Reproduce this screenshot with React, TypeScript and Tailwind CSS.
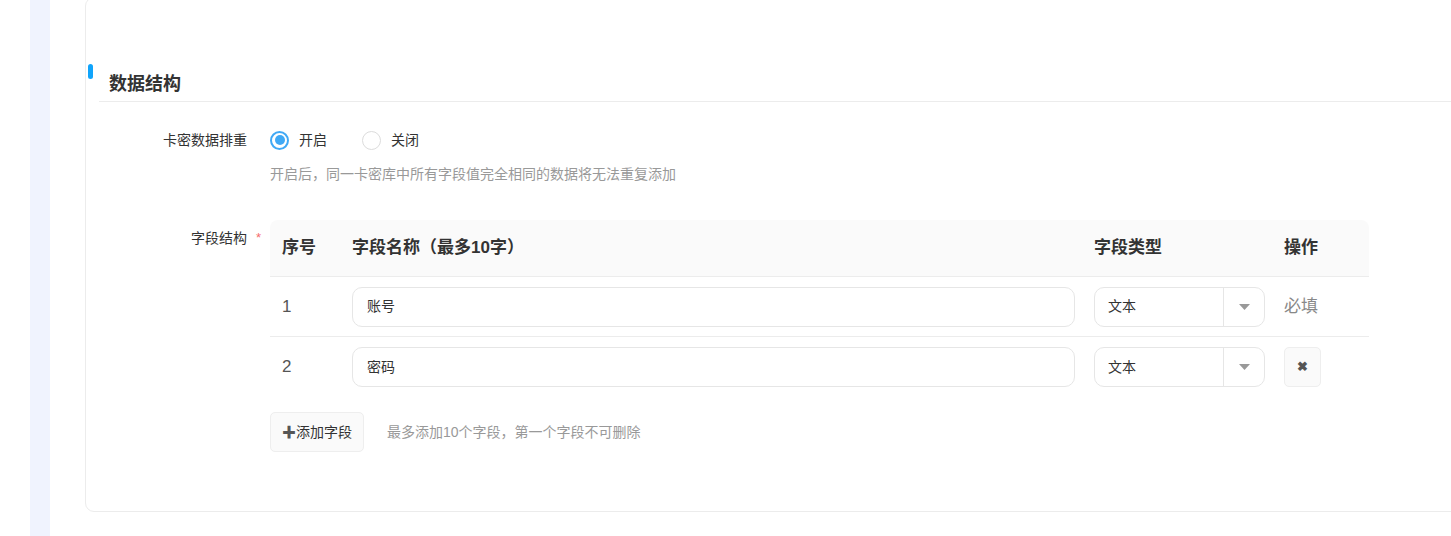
const font = { fontFamily: '"Liberation Sans", "Noto Sans CJK SC", sans-serif' };

type Row = { no: number; name: string; type: string; required: boolean };

const rows: Row[] = [
  { no: 1, name: "账号", type: "文本", required: true },
  { no: 2, name: "密码", type: "文本", required: false },
];

function Radio({ checked, label }: { checked: boolean; label: string }) {
  return (
    <label className="flex items-center gap-[10px] text-[14px] text-[#333]">
      {checked ? (
        <span className="flex h-[19px] w-[19px] items-center justify-center rounded-full border-[2px] border-[#40a9f5] bg-white">
          <span className="h-[10px] w-[10px] rounded-full bg-[#40a9f5]" />
        </span>
      ) : (
        <span className="h-[19px] w-[19px] rounded-full border border-[#dcdcdc] bg-white" />
      )}
      <span>{label}</span>
    </label>
  );
}

function TypeSelect({ value }: { value: string }) {
  return (
    <div className="flex h-[40px] w-[171px] items-center rounded-[10px] border border-[#e6e6e6] bg-white">
      <span className="flex-1 pl-[13px] text-[14px] text-[#333]">{value}</span>
      <span className="flex h-full w-[41px] items-center justify-center border-l border-[#e6e6e6]">
        <svg width="11" height="6" viewBox="0 0 11 6">
          <path d="M0 0h11L5.5 6z" fill="#999" />
        </svg>
      </span>
    </div>
  );
}

export default function App() {
  return (
    <div className="flex h-[536px] w-[1451px] overflow-hidden bg-white" style={font}>
      <div className="w-[30px] shrink-0" />
      <div className="w-[20px] shrink-0 bg-[#f0f3fe]" />
      <div className="w-[35px] shrink-0" />
      <div className="-mr-4 -mt-[3px] flex h-[515px] flex-1 flex-col rounded-[9px] border border-[#ececec] bg-white pt-[65px]">
        {/* section title */}
        <div className="flex items-start">
          <span className="ml-[2px] mt-[1px] h-[15px] w-[5px] rounded-full bg-[#10a4fb]" />
          <div className="ml-[6px] flex-1 border-b border-[#ececec] pb-[5px] pl-[10px] pt-[9px]">
            <h2 className="text-[18px] font-bold leading-[24px] text-[#333]">数据结构</h2>
          </div>
        </div>

        {/* dedupe */}
        <div className="mt-[26px] flex">
          <div className="w-[161px] shrink-0 text-right text-[14px] leading-[24px] text-[#333]">卡密数据排重</div>
          <div className="ml-[23px] flex flex-col">
            <div className="flex h-[24px] items-center gap-[35px]">
              <Radio checked label="开启" />
              <Radio checked={false} label="关闭" />
            </div>
            <p className="mt-[12px] text-[14px] leading-[20px] text-[#999]">
              开启后，同一卡密库中所有字段值完全相同的数据将无法重复添加
            </p>
          </div>
        </div>

        {/* field structure */}
        <div className="mt-[36px] flex">
          <div className="relative w-[161px] shrink-0 pt-[6px] text-right text-[14px] leading-[24px] text-[#333]">
            字段结构
            <span className="absolute right-[-14px] top-[6px] text-[13px] text-[#f56c6c]">*</span>
          </div>
          <div className="ml-[23px] flex flex-col">
            <div className="w-[1099px]">
              <div className="flex h-[57px] items-center rounded-t-[8px] border-b border-[#ececec] bg-[#fafafa] text-[17px] font-bold text-[#333]">
                <div className="w-[82px] pl-[12px]">序号</div>
                <div className="w-[742px]">字段名称（最多10字）</div>
                <div className="w-[190px]">字段类型</div>
                <div className="flex-1">操作</div>
              </div>
              {rows.map((r, i) => (
                <div
                  key={r.no}
                  className={`flex h-[60px] items-center ${i < rows.length - 1 ? "border-b border-[#ececec]" : ""}`}
                >
                  <div className="w-[82px] pl-[12px] text-[17px] text-[#555]">{r.no}</div>
                  <div className="w-[742px]">
                    <div className="flex h-[40px] w-[723px] items-center rounded-[10px] border border-[#e6e6e6] bg-white pl-[14px] text-[14px] text-[#333]">
                      {r.name}
                    </div>
                  </div>
                  <div className="w-[190px]">
                    <TypeSelect value={r.type} />
                  </div>
                  <div className="flex-1">
                    {r.required ? (
                      <span className="text-[17px] text-[#888]">必填</span>
                    ) : (
                      <button className="flex h-[40px] w-[37px] items-center justify-center rounded-[5px] border border-[#eeeeee] bg-[#fafafa] text-[13px] font-bold text-[#555]">
                        ✖
                      </button>
                    )}
                  </div>
                </div>
              ))}
            </div>
            <div className="mt-[15px] flex items-center">
              <button className="flex h-[40px] w-[94px] items-center justify-center rounded-[5px] border border-[#eeeeee] bg-[#fafafa] text-[14px] text-[#333]">
                <span className="font-bold text-[#555]">✚</span>添加字段
              </button>
              <span className="ml-[23px] text-[14px] text-[#999]">最多添加10个字段，第一个字段不可删除</span>
            </div>
          </div>
        </div>
      </div>
    </div>
  );
}
